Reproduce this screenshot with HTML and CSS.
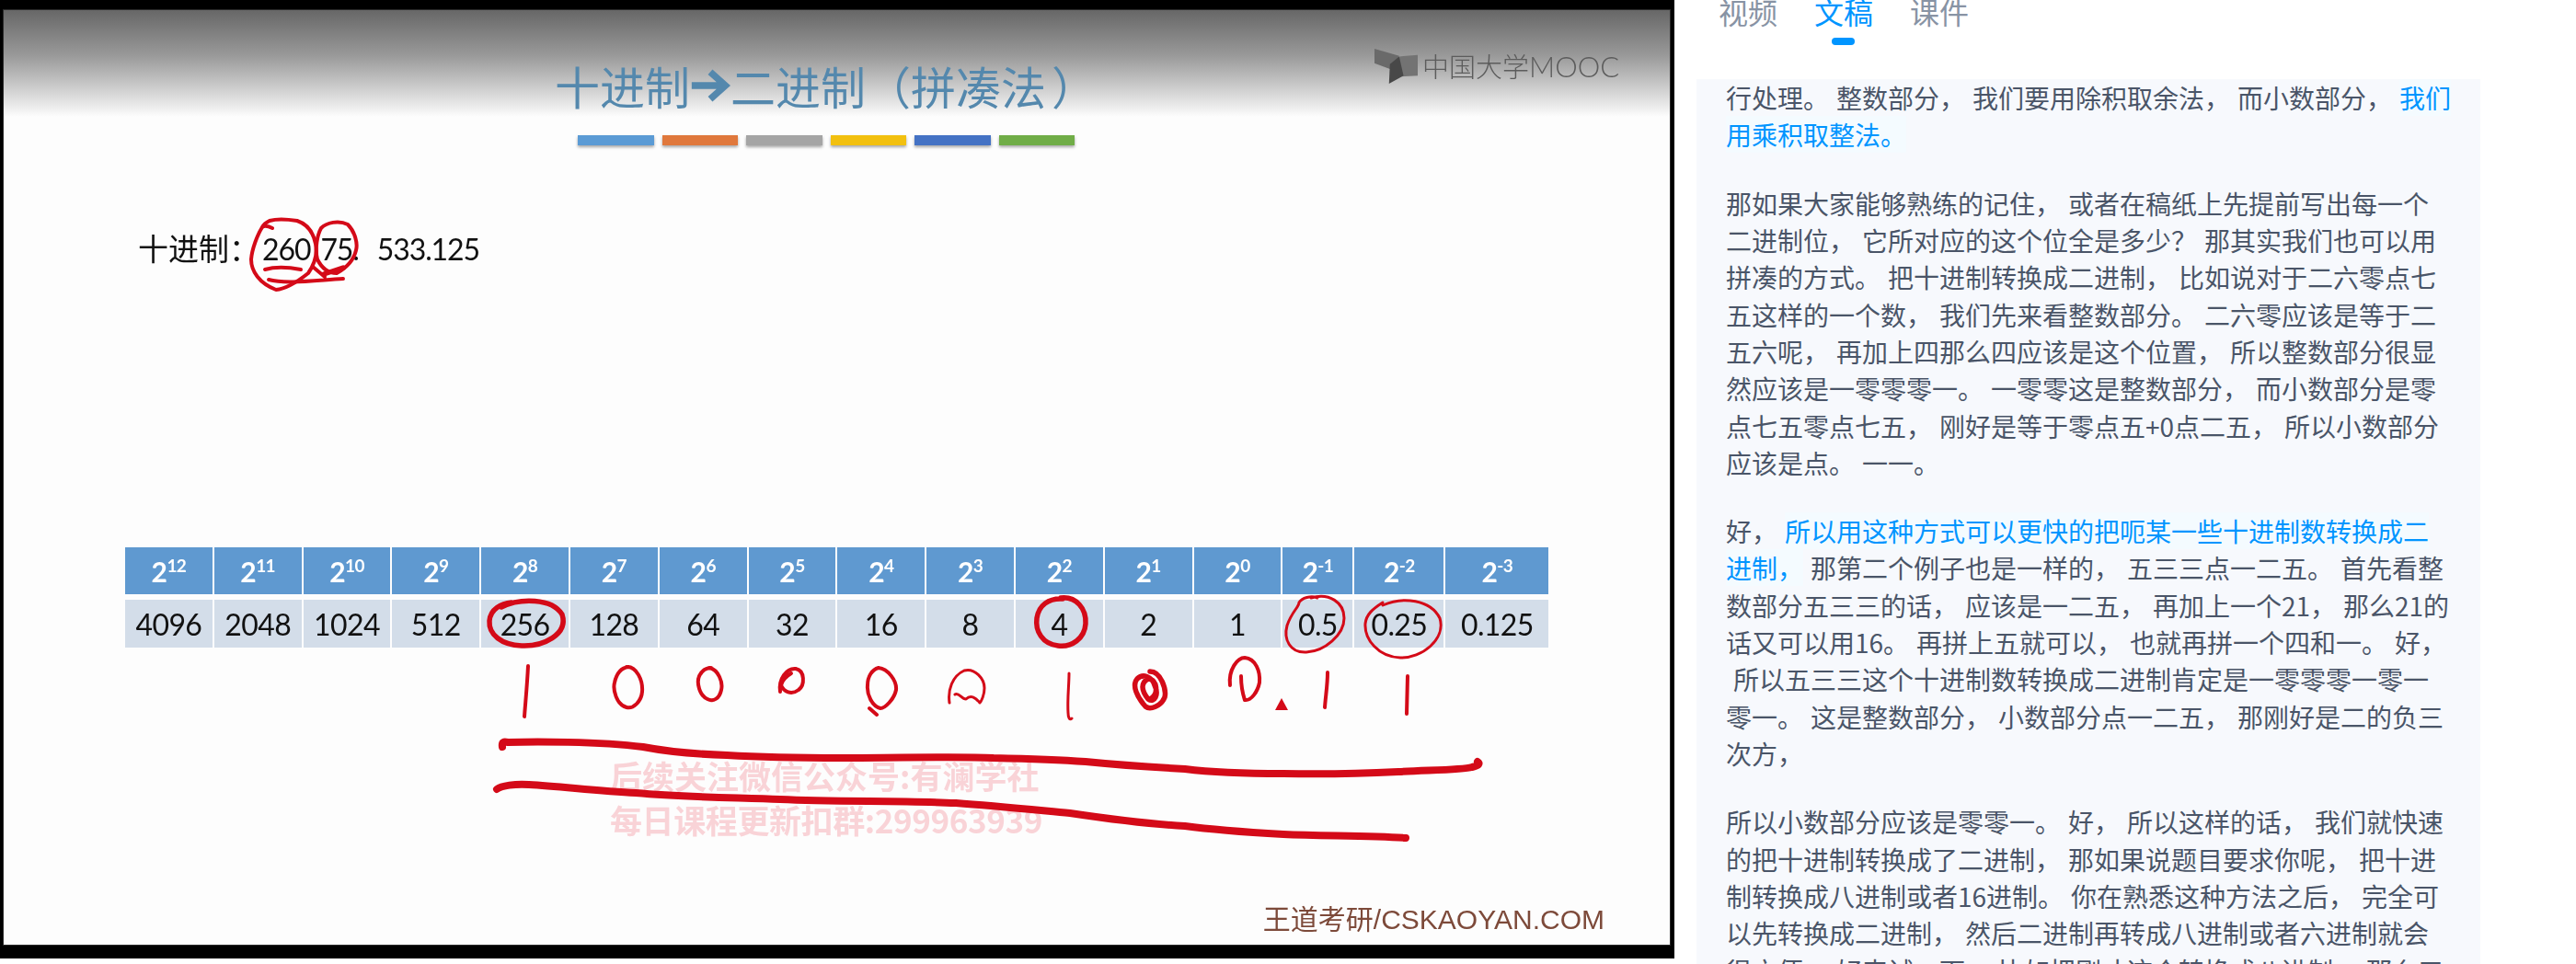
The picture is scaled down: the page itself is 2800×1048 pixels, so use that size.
FILE: index.html
```html
<!DOCTYPE html>
<html lang="zh-CN">
<head>
    <meta charset="UTF-8">
    <title>十进制转二进制 文稿</title>
    <link rel="stylesheet" href="styles.css">
</head>
<body>

<div class="video-pane">
    <div class="slide">
        <div class="slide-head">
            <div class="title-block">
                <h1 class="slide-title">十进制<svg class="title-arrow" viewBox="0 0 48 40"><path d="M2 20H38M24 4L42 20L24 36" /></svg>二进制（拼凑法<span class="title-paren">）</span></h1>
                <div class="bars">
                    <span class="bar bar-blue"></span>
                    <span class="bar bar-orange"></span>
                    <span class="bar bar-gray"></span>
                    <span class="bar bar-yellow"></span>
                    <span class="bar bar-indigo"></span>
                    <span class="bar bar-green"></span>
                </div>
            </div>
            <div class="logo">
                <svg class="logo-icon" viewBox="38 35 140 113">
                    <polygon points="38,35 118,58 100,105 38,82" fill="#6a6a6a" />
                    <polygon points="118,60 178,55 178,122 118,125" fill="#737373" />
                    <polygon points="118,60 88,85 85,148 132,122" fill="#484848" />
                </svg>
                <span class="logo-text">中国大学<span class="logo-latin">MOOC</span></span>
            </div>
        </div>

        <div class="decimal-row">
            <span class="decimal-label">十进制：</span>
            <span>260</span>
            <span class="decimal-frac">75.</span>
            <span class="decimal-other">533.125</span>
        </div>

        <div class="power-table">
            <div class="th">2<sup>12</sup></div>
            <div class="th">2<sup>11</sup></div>
            <div class="th">2<sup>10</sup></div>
            <div class="th">2<sup>9</sup></div>
            <div class="th">2<sup>8</sup></div>
            <div class="th">2<sup>7</sup></div>
            <div class="th">2<sup>6</sup></div>
            <div class="th">2<sup>5</sup></div>
            <div class="th">2<sup>4</sup></div>
            <div class="th">2<sup>3</sup></div>
            <div class="th">2<sup>2</sup></div>
            <div class="th">2<sup>1</sup></div>
            <div class="th">2<sup>0</sup></div>
            <div class="th">2<sup>-1</sup></div>
            <div class="th">2<sup>-2</sup></div>
            <div class="th">2<sup>-3</sup></div>
            <div class="td">4096</div>
            <div class="td">2048</div>
            <div class="td">1024</div>
            <div class="td">512</div>
            <div class="td">256</div>
            <div class="td">128</div>
            <div class="td">64</div>
            <div class="td">32</div>
            <div class="td">16</div>
            <div class="td">8</div>
            <div class="td">4</div>
            <div class="td">2</div>
            <div class="td">1</div>
            <div class="td">0.5</div>
            <div class="td">0.25</div>
            <div class="td">0.125</div>
        </div>

        <div class="slide-foot">王道考研/CSKAOYAN.COM</div>

        <div class="watermark">
            <div>后续关注微信公众号:有澜学社</div>
            <div class="watermark-narrow">每日课程更新扣群:299963939</div>
        </div>

        <!-- teacher's pen strokes, in page coordinates -->
        <svg class="ink" viewBox="4 11 1811 1016">
            <g class="ink-thin">
                <path d="M1425 650C1445 644 1461 655 1461 672C1461 690 1440 708 1420 709C1402 710 1395 695 1399 680C1404 665 1412 660 1412 655C1415 650 1425 647 1432 650" />
                <path d="M1503 658C1525 648 1555 652 1565 672C1572 695 1545 716 1522 715C1498 714 1483 695 1484 678C1485 668 1492 662 1503 655" />
                <path d="M1162 732C1162 745 1160 760 1161 775C1161 781 1163 783 1165 781" />
                <path d="M1032 764C1030 750 1035 735 1048 729C1060 726 1070 738 1070 748C1070 755 1067 762 1065 764C1060 758 1055 755 1050 760C1045 760 1042 752 1038 755" />
            </g>
            <g class="ink-mid">
                <path d="M296 248C290 245 287 245 285 247C280 255 274 270 273 282C273 295 282 308 300 315C312 314 325 305 335 297C342 287 345 275 343 265C340 250 332 243 323 240C310 238 300 238 293 240C289 242 286 245 285 247" />
                <path d="M345 282C342 270 345 255 349 248C355 242 368 239 378 244C386 252 389 265 387 272C384 285 375 292 366 297C358 297 350 292 345 282" />
                <path d="M288 293C298 290 312 290 327 293M292 304C310 309 340 305 373 303M340 290L353 301" />
                <path d="M574 724C573 745 571 765 570 779" />
                <path d="M681 725C692 724 699 740 698 752C697 763 688 771 681 769C670 766 666 750 668 742C670 733 675 726 683 725" />
                <path d="M771 726C781 728 786 742 784 750C782 760 775 763 769 760C760 756 757 742 760 735C763 729 768 726 773 726" />
                <path d="M848 752C846 738 855 726 865 727C875 729 875 745 868 750C860 756 852 752 849 745C850 740 855 735 860 732" />
                <path d="M955 726C965 727 975 740 974 750C972 760 962 770 957 770C948 768 942 755 943 745C943 735 948 728 955 726M945 770L953 777" />
                <path d="M1337 745C1335 728 1345 715 1353 715C1365 716 1370 730 1369 742C1367 752 1360 762 1353 761C1351 755 1349 745 1349 735" />
                <path d="M1443 731C1443 745 1441 755 1440 769" />
                <path d="M1530 735L1529 776" />
            </g>
            <g class="ink-bold">
                <path d="M545 660C565 650 600 650 611 668C618 690 590 703 567 702C545 701 531 690 532 675C533 662 545 656 556 655" />
                <path d="M1153 650C1170 648 1181 662 1180 678C1179 694 1165 704 1150 702C1133 700 1125 686 1127 672C1129 658 1140 650 1155 651" />
                <path d="M352 298L373 291" />
                <path d="M1250 730C1262 730 1268 750 1266 758C1262 768 1250 772 1245 768C1236 758 1230 745 1236 738C1242 732 1252 735 1255 745C1260 755 1255 765 1248 760C1240 750 1240 742 1248 738C1258 738 1260 755 1250 760" />
            </g>
            <path class="ink-dot" d="M1393 759L1400 772L1386 772Z" />
            <g class="ink-line">
                <path d="M546 812C545 806 548 806 552 807C580 806 650 806 699 812C730 818 760 820 790 821C840 824 880 824 915 824C980 824 1040 822 1080 824C1120 825 1150 826 1180 828C1220 832 1250 834 1288 836C1320 840 1360 841 1395 841C1440 842 1480 841 1520 839C1560 837 1590 837 1600 834C1608 832 1609 830 1606 828" />
                <path d="M540 858C545 854 560 852 575 853C610 855 650 860 691 862C745 867 800 867 848 869C910 872 980 870 1039 873C1080 876 1120 880 1163 884C1210 891 1250 896 1288 898C1325 903 1360 905 1395 907C1440 909 1490 908 1528 911" />
            </g>
        </svg>
    </div>
</div>

<div class="side-pane">
    <div class="tabs">
        <span class="tab">视频</span>
        <span class="tab active">文稿</span>
        <span class="tab">课件</span>
    </div>
    <div class="transcript">
        <p>行处理。 整数部分， 我们要用除积取余法， 而小数部分， <span class="hl">我们用乘积取整法。</span></p>
        <p>那如果大家能够熟练的记住， 或者在稿纸上先提前写出每一个二进制位， 它所对应的这个位全是多少？ 那其实我们也可以用拼凑的方式。 把十进制转换成二进制， 比如说对于二六零点七五这样的一个数， 我们先来看整数部分。 二六零应该是等于二五六呢， 再加上四那么四应该是这个位置， 所以整数部分很显然应该是一零零零一。 一零零这是整数部分， 而小数部分是零点七五零点七五， 刚好是等于零点五+0点二五， 所以小数部分应该是点。 一一。</p>
        <p>好， <span class="hl">所以用这种方式可以更快的把呃某一些十进制数转换成二进制，</span> 那第二个例子也是一样的， 五三三点一二五。 首先看整数部分五三三的话， 应该是一二五， 再加上一个21， 那么21的话又可以用16。 再拼上五就可以， 也就再拼一个四和一。 好，<br>&nbsp;所以五三三这个十进制数转换成二进制肯定是一零零零一零一零一。 这是整数部分， 小数部分点一二五， 那刚好是二的负三次方，</p>
        <p>所以小数部分应该是零零一。 好， 所以这样的话， 我们就快速的把十进制转换成了二进制， 那如果说题目要求你呢， 把十进制转换成八进制或者16进制。 你在熟悉这种方法之后， 完全可以先转换成二进制， 然后二进制再转成八进制或者六进制就会很方便。 好来试一下。 比如把刚才这个转换成八进制， 那么三</p>
    </div>
</div>

</body>
</html>
```
FILE: styles.css
```css
html, body {
    margin: 0;
    height: 1048px;
    overflow: hidden;
    background: #fff;
}

body {
    display: flex;
    align-items: flex-start;
    font-family: "Noto Sans CJK SC", sans-serif;
}

/* video frame */
.video-pane {
    width: 1820px;
    height: 1042px;
    flex: none;
    box-sizing: border-box;
    padding: 11px 5px 15px 4px;
    background: #000;
}

.slide {
    position: relative;
    display: flex;
    flex-direction: column;
    height: 100%;
    box-sizing: border-box;
    background: linear-gradient(#676767 0, #9a9a9a 50px, #e4e4e4 100px, #fdfdfd 116px);
    box-shadow: 0 0 0 1px #2a2a2a;
    color: #111;
}

.slide-head {
    display: flex;
    align-items: flex-start;
    padding-top: 56px;
}

.title-block {
    margin-left: 599px;
}

.slide-title {
    display: flex;
    align-items: center;
    margin: 0;
    font-size: 49px;
    line-height: 52px;
    font-weight: 400;
    color: #5488ad;
    filter: blur(0.5px);
}

.title-arrow {
    width: 44px;
    height: 38px;
    fill: none;
    stroke: #5488ad;
    stroke-width: 8;
}

.title-paren {
    margin-left: 6px;
}

.bars {
    display: flex;
    gap: 9px;
    margin-top: 28px;
    margin-left: 25px;
}

.bar {
    width: 82.5px;
    height: 11px;
    box-shadow: 0 2px 3px rgba(0, 0, 0, 0.35);
}

.bar-blue { background: #5b9bd5; }
.bar-orange { background: #e0783c; }
.bar-gray { background: #a5a5a5; }
.bar-yellow { background: #f2c00f; }
.bar-indigo { background: #4472c4; }
.bar-green { background: #70ad47; }

.logo {
    display: flex;
    align-items: center;
    margin: -15px 0 0 302px;
    color: #5c5c5c;
    filter: blur(0.5px);
}

.logo-icon {
    width: 47px;
    height: 38px;
    margin-right: 5px;
}

.logo-text {
    font-size: 29px;
    line-height: 38px;
    font-weight: 300;
    white-space: nowrap;
}

.logo-latin {
    font-family: Lato, sans-serif;
    font-size: 31px;
}

.decimal-row {
    display: flex;
    align-items: baseline;
    margin: 89px 0 0 146px;
    font-family: Lato, "Noto Sans CJK SC", sans-serif;
    font-size: 32px;
    line-height: 44px;
    letter-spacing: -1.1px;
    filter: blur(0.3px);
}

.decimal-label {
    width: 135px;
    font-family: "Noto Sans CJK SC", sans-serif;
    font-size: 33px;
    letter-spacing: 0;
}

.decimal-frac {
    margin-left: 11px;
}

.decimal-other {
    margin-left: 20px;
}

.power-table {
    display: grid;
    grid-template-columns: repeat(13, 94.8px) 76px 97px 112px;
    grid-template-rows: 51px 52px;
    gap: 6px 2px;
    margin: 302px 0 0 132px;
    text-align: center;
    filter: blur(0.3px);
}

.th, .td {
    display: flex;
    align-items: center;
    justify-content: center;
    font-family: Lato, sans-serif;
}

.th {
    background: #5f99d0;
    color: #fff;
    font-size: 30px;
    font-weight: 700;
    letter-spacing: -0.6px;
}

.th sup {
    font-size: 19px;
    line-height: 1;
    margin-top: -12px;
    vertical-align: baseline;
}

.td {
    background: #d3dde9;
    font-size: 32px;
    letter-spacing: -0.6px;
}

.slide-foot {
    margin: auto 71px 8px auto;
    font-size: 30px;
    line-height: 38px;
    font-family: "Liberation Sans", "Noto Sans CJK SC", sans-serif;
    color: #7d4a3a;
    filter: blur(0.4px);
}

/* overlays on the slide */
.watermark {
    position: absolute;
    left: 659px;
    top: 808px;
    font-size: 35px;
    line-height: 48px;
    font-weight: 700;
    color: #f9d3d7;
    white-space: nowrap;
    filter: blur(0.6px);
}

.watermark-narrow {
    letter-spacing: -0.4px;
}

.ink {
    position: absolute;
    left: 0;
    top: 0;
    width: 1811px;
    height: 1016px;
    fill: none;
    stroke: #d40a18;
    stroke-linecap: round;
    stroke-linejoin: round;
}

.ink-thin { stroke-width: 3; }
.ink-mid { stroke-width: 4; }
.ink-bold { stroke-width: 5.5; }
.ink-line { stroke-width: 8; }

.ink-dot {
    fill: #d40a18;
    stroke: none;
}

/* right side */
.side-pane {
    flex: 1;
    padding-left: 24px;
}

.tabs {
    display: flex;
    gap: 40px;
    height: 86px;
    padding-left: 24px;
    box-sizing: border-box;
}

.tab {
    position: relative;
    height: 32px;
    margin-top: -4px;
    font-size: 32px;
    line-height: 32px;
    color: #8893a4;
}

.tab.active {
    color: #0095ff;
}

.tab.active::after {
    content: "";
    position: absolute;
    left: 19px;
    top: 45px;
    width: 25px;
    height: 8px;
    border-radius: 4px;
    background: #0095ff;
}

.transcript {
    width: 852px;
    box-sizing: border-box;
    padding: 0 32px;
    background: #f7f9fd;
    font-size: 28px;
    line-height: 40.32px;
    word-spacing: 1.7px;
    color: #4a5568;
}

.transcript p {
    margin: 0 0 34px;
}

.hl {
    color: #0095ff;
    background: #f4fbff;
}
```
